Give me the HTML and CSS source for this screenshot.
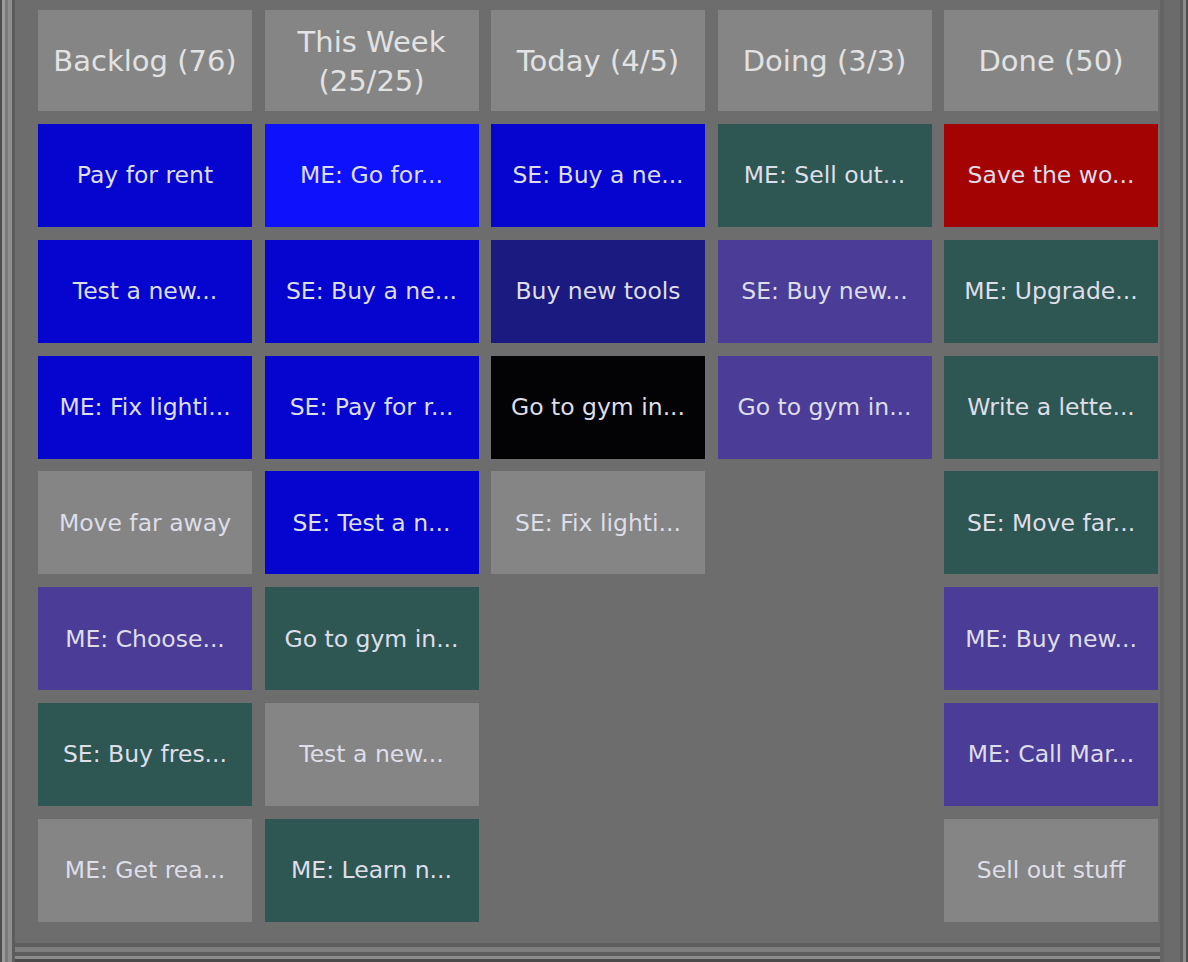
FILE: index.html
```html
<!DOCTYPE html>
<html>
<head>
<meta charset="utf-8">
<title>Kanban</title>
<link rel="stylesheet" href="styles.css">
</head>
<body>
<div class="frame">
  <div class="board">
    <div class="column">
      <div class="header">Backlog (76)</div>
      <div class="card blue">Pay for rent</div>
      <div class="card blue">Test a new...</div>
      <div class="card blue">ME: Fix lighti...</div>
      <div class="card gray">Move far away</div>
      <div class="card purple">ME: Choose...</div>
      <div class="card teal">SE: Buy fres...</div>
      <div class="card gray">ME: Get rea...</div>
    </div>
    <div class="column">
      <div class="header">This Week<br>(25/25)</div>
      <div class="card bright">ME: Go for...</div>
      <div class="card blue">SE: Buy a ne...</div>
      <div class="card blue">SE: Pay for r...</div>
      <div class="card blue">SE: Test a n...</div>
      <div class="card teal">Go to gym in...</div>
      <div class="card gray">Test a new...</div>
      <div class="card teal">ME: Learn n...</div>
    </div>
    <div class="column">
      <div class="header">Today (4/5)</div>
      <div class="card blue">SE: Buy a ne...</div>
      <div class="card navy">Buy new tools</div>
      <div class="card black">Go to gym in...</div>
      <div class="card gray">SE: Fix lighti...</div>
    </div>
    <div class="column">
      <div class="header">Doing (3/3)</div>
      <div class="card teal">ME: Sell out...</div>
      <div class="card purple">SE: Buy new...</div>
      <div class="card purple">Go to gym in...</div>
    </div>
    <div class="column">
      <div class="header">Done (50)</div>
      <div class="card red">Save the wo...</div>
      <div class="card teal">ME: Upgrade...</div>
      <div class="card teal">Write a lette...</div>
      <div class="card teal">SE: Move far...</div>
      <div class="card purple">ME: Buy new...</div>
      <div class="card purple">ME: Call Mar...</div>
      <div class="card gray">Sell out stuff</div>
    </div>
  </div>
</div>
</body>
</html>
```

FILE: styles.css
```css
html, body {
  margin: 0;
  padding: 0;
  background: #6d6d6d;
}

.frame {
  box-sizing: border-box;
  width: 1188px;
  height: 962px;
  padding: 10px 30px 0 38px;
  background: #6d6d6d;
  box-shadow:
    inset 2px 0 0 #4e4e4e,
    inset 5px 0 0 #9a9a9a,
    inset 8px 0 0 #7a7a7a,
    inset 12px 0 0 #8e8e8e,
    inset 15px 0 0 #5c5c5c,
    inset -2px 0 0 #4e4e4e,
    inset -5px 0 0 #8c8c8c,
    inset -8px 0 0 #5e5e5e,
    inset -24px 0 0 #6b6b6b,
    inset -28px 0 0 #646464,
    inset 0 -3px 0 #4a4a4a,
    inset 0 -6px 0 #8c8c8c,
    inset 0 -10px 0 #5c5c5c,
    inset 0 -15px 0 #7e7e7e,
    inset 0 -19px 0 #5e5e5e;
  font-family: "DejaVu Sans", "Noto Sans", sans-serif;
}

.board {
  display: grid;
  grid-template-columns: repeat(5, 1fr);
  column-gap: 12.5px;
}

.column {
  display: flex;
  flex-direction: column;
  gap: 12.8px;
}

.header {
  height: 101px;
  background: #858585;
  color: #e2e2e2;
  font-size: 29px;
  line-height: 39px;
  display: flex;
  align-items: center;
  justify-content: center;
  text-align: center;
  padding-top: 2px;
  box-sizing: border-box;
  margin-bottom: 0.2px;
}

.card {
  height: 103px;
  display: flex;
  align-items: center;
  justify-content: center;
  color: #dedee8;
  font-size: 23.5px;
  white-space: nowrap;
}

.blue { background: #0505cf; }
.bright { background: #0e12fc; }
.navy { background: #1b1a80; }
.black { background: #030306; }
.purple { background: #4b3c98; }
.teal { background: #2e5753; }
.gray { background: #858585; }
.red { background: #a40303; }
```
